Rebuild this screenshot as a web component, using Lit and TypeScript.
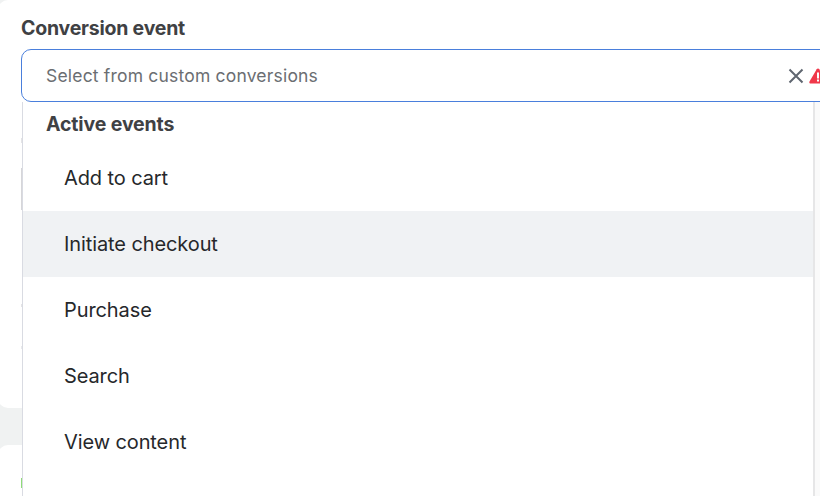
import { LitElement, html, css } from "lit";
import { customElement } from "lit/decorators.js";

const SLIVERS = [
  { top: 138, height: 5, color: "#e4e4e6" },
  { top: 168, height: 42, color: "#d6d6d9" },
  { top: 304, height: 3, color: "#e4e4e6" },
  { top: 346, height: 3, color: "#e9eaec" },
  { top: 478, height: 10, color: "#8fdc78" },
];

@customElement("app-root")
export class AppRoot extends LitElement {
  static styles = css`
    :host {
      display: block;
      width: 820px;
      height: 496px;
      overflow: hidden;
      position: relative;
      background: #f0f2f2;
      font-family: Inter, "Liberation Sans", sans-serif;
    }
    .page {
      display: flex;
      flex-direction: column;
      gap: 37px;
      margin-left: -2px;
      width: 862px;
    }
    .card {
      background: #fff;
      border-radius: 10px;
      box-sizing: border-box;
    }
    .card.top {
      height: 408px;
      padding: 16px 0 0 23px;
      display: flex;
      flex-direction: column;
    }
    .card.bottom {
      height: 80px;
    }
    .label {
      font-size: 19.5px;
      line-height: 24px;
      font-weight: 650;
      color: #3f4144;
      letter-spacing: -0.22px;
      margin-bottom: 9px;
    }
    .field {
      display: flex;
      align-items: center;
      height: 53px;
      box-sizing: border-box;
      border: 1px solid #4a7fdc;
      border-radius: 10px;
      padding: 0 0 0 24px;
      color: #6b6e72;
      font-size: 17.5px;
      letter-spacing: 0.19px;
    }
    .placeholder {
      flex: 1;
    }
    .icons {
      display: flex;
      align-items: center;
      gap: 5px;
      margin-right: 32px;
    }
    .icons svg {
      display: block;
    }
    .sliver {
      position: absolute;
      left: 21px;
      width: 1px;
    }
    .sheet-edge {
      position: absolute;
      top: 102px;
      left: 813px;
      width: 7px;
      height: 394px;
      box-sizing: border-box;
      border-left: 2px solid #e6e6e7;
      background: #fafafa;
    }
    .menu {
      position: absolute;
      top: 102px;
      left: 22px;
      width: 791px;
      height: 394px;
      box-sizing: border-box;
      border-left: 1px solid #d9dbe2;
      background: #fff;
      display: flex;
      flex-direction: column;
    }
    .heading {
      height: 43px;
      box-sizing: border-box;
      padding-left: 23px;
      display: flex;
      align-items: center;
      font-size: 19.5px;
      font-weight: 650;
      color: #3f4144;
      letter-spacing: -0.12px;
    }
    .item {
      height: 66px;
      flex: none;
      box-sizing: border-box;
      padding-left: 41px;
      display: flex;
      align-items: center;
      font-size: 20px;
      color: #26282b;
      letter-spacing: -0.1px;
    }
    .item.hover {
      background: #f0f2f4;
    }
  `;

  render() {
    const items = ["Add to cart", "Initiate checkout", "Purchase", "Search", "View content"];
    return html`
      <div class="page">
        <div class="card top">
          <div class="label">Conversion event</div>
          <div class="field">
            <span class="placeholder">Select from custom conversions</span>
            <div class="icons">
              <svg width="16" height="16" viewBox="0 0 16 16" fill="none" stroke="#5f6670" stroke-width="2">
                <path d="M1.500 1.500 14.500 14.500M14.500 1.500 1.500 14.500" />
              </svg>
              <svg width="18" height="16" viewBox="0 0 18 16">
                <path d="M9 .5c.6 0 1 .3 1.300.8l7.200 12.200c.5.900 0 2-1.200 2H1.700c-1.200 0-1.700-1.100-1.200-2L7.700 1.300C8 .8 8.400.5 9 .5z" fill="#f0384a" />
                <rect x="8" y="4.500" width="2" height="6" fill="#fff" />
                <rect x="8" y="11.500" width="2" height="2" fill="#fff" />
              </svg>
            </div>
          </div>
        </div>
        <div class="card bottom"></div>
      </div>
      ${SLIVERS.map(
        (s) =>
          html`<div class="sliver" style="top:${s.top}px;height:${s.height}px;background:${s.color}"></div>`
      )}
      <div class="sheet-edge"></div>
      <div class="menu">
        <div class="heading">Active events</div>
        ${items.map(
          (t, i) => html`<div class="item ${i === 1 ? "hover" : ""}">${t}</div>`
        )}
      </div>
    `;
  }
}
